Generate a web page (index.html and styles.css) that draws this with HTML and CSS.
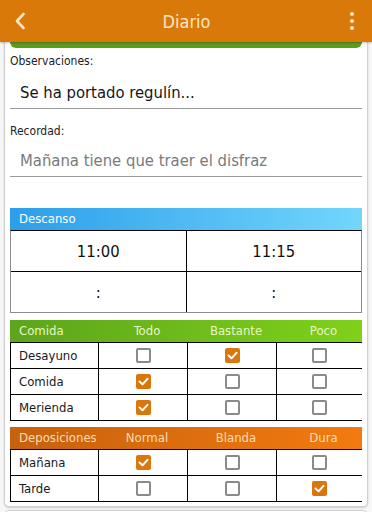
FILE: index.html
```html
<!DOCTYPE html>
<html lang="es">
<head>
<meta charset="utf-8">
<title>Diario</title>
<link rel="stylesheet" href="styles.css">
</head>
<body>
<header class="topbar">
  <svg class="back" width="12" height="18" viewBox="0 0 12 18"><polyline points="9.5,2 3,9 9.5,16" fill="none" stroke="#fbe6c2" stroke-width="2.6" stroke-linecap="round" stroke-linejoin="round"/></svg>
  <div class="title">Diario</div>
  <svg class="more" width="6" height="20" viewBox="0 0 6 20"><circle cx="3" cy="3" r="2" fill="#fbe6c2"/><circle cx="3" cy="10" r="2" fill="#fbe6c2"/><circle cx="3" cy="17" r="2" fill="#fbe6c2"/></svg>
</header>
<main class="page">
  <div class="card">
    <div class="strip"></div>
    <div class="field first">
      <div class="label">Observaciones:</div>
      <div class="input">Se ha portado regulín...</div>
    </div>
    <div class="field second">
      <div class="label">Recordad:</div>
      <div class="input placeholder">Mañana tiene que traer el disfraz</div>
    </div>

    <section class="descanso">
      <div class="bar blue">Descanso</div>
      <div class="times">
        <div class="tcell">11:00</div>
        <div class="tcell">11:15</div>
        <div class="tcell">:</div>
        <div class="tcell">:</div>
      </div>
    </section>

    <section class="tbl comida">
      <div class="bar green cols">
        <span class="hl">Comida</span><span>Todo</span><span>Bastante</span><span>Poco</span>
      </div>
      <div class="grid">
        <div class="rl">Desayuno</div><div class="c"><span class="cb"></span></div><div class="c"><span class="cb on"><svg viewBox="0 0 15 15"><polyline points="3.5,7.5 6.5,10.3 11.5,4.8"/></svg></span></div><div class="c"><span class="cb"></span></div>
        <div class="rl">Comida</div><div class="c"><span class="cb on"><svg viewBox="0 0 15 15"><polyline points="3.5,7.5 6.5,10.3 11.5,4.8"/></svg></span></div><div class="c"><span class="cb"></span></div><div class="c"><span class="cb"></span></div>
        <div class="rl">Merienda</div><div class="c"><span class="cb on"><svg viewBox="0 0 15 15"><polyline points="3.5,7.5 6.5,10.3 11.5,4.8"/></svg></span></div><div class="c"><span class="cb"></span></div><div class="c"><span class="cb"></span></div>
      </div>
    </section>

    <section class="tbl depos">
      <div class="bar orange cols">
        <span class="hl">Deposiciones</span><span>Normal</span><span>Blanda</span><span>Dura</span>
      </div>
      <div class="grid">
        <div class="rl">Mañana</div><div class="c"><span class="cb on"><svg viewBox="0 0 15 15"><polyline points="3.5,7.5 6.5,10.3 11.5,4.8"/></svg></span></div><div class="c"><span class="cb"></span></div><div class="c"><span class="cb"></span></div>
        <div class="rl">Tarde</div><div class="c"><span class="cb"></span></div><div class="c"><span class="cb"></span></div><div class="c"><span class="cb on"><svg viewBox="0 0 15 15"><polyline points="3.5,7.5 6.5,10.3 11.5,4.8"/></svg></span></div>
      </div>
    </section>
  </div>
  <div class="card next">
    <div class="nextgrid"><div></div><div></div></div>
  </div>
</main>
</body>
</html>
```

FILE: styles.css
```css
html, body {
  margin: 0;
  padding: 0;
}
body {
  width: 372px;
  height: 512px;
  overflow: hidden;
  background: #f7f7f7;
  font-family: "DejaVu Sans Condensed", "DejaVu Sans", sans-serif;
  color: #1e1e1e;
}
.topbar {
  height: 42px;
  background: #d9790a;
  display: flex;
  align-items: center;
  padding: 0 17px 0 14px;
  box-sizing: border-box;
  position: relative;
  z-index: 2;
  box-shadow: 0 1px 2px rgba(0,0,0,0.25);
}
.back { display: block; }
.title {
  flex: 1;
  text-align: center;
  color: #fbe6c2;
  font-size: 18px;
  padding-right: 2px;
}
.more { display: block; }

.page {
  padding: 0 4px;
}
.card {
  background: #fff;
  border: 1px solid #d0d0d0;
  border-top: none;
  border-radius: 0 0 5px 5px;
  padding: 0 5px 4px;
  box-shadow: 0 1px 2px rgba(0,0,0,0.18);
}
.strip {
  height: 6px;
  background: #5c9c1b;
  border-radius: 0 0 6px 6px;
}
.field.first { margin-top: 5px; }
.field.second { margin-top: 14px; }
.label {
  font-size: 12px;
  line-height: 16px;
  color: #222;
}
.input {
  font-size: 16.5px;
  line-height: 30px;
  padding: 9px 10px 0;
  border-bottom: 1px solid #9a9a9a;
  color: #161616;
}
.field.second .input { padding-top: 7px; }
.input.placeholder { color: #7a7a7a; }

.descanso { margin-top: 31px; }
.bar {
  height: 22px;
  line-height: 22px;
  font-size: 13px;
  box-sizing: border-box;
}
.bar.blue {
  background: linear-gradient(to right, #2c9eea, #72d6fc);
  color: #fff;
  padding-left: 9px;
}
.times {
  display: grid;
  grid-template-columns: 1fr 1fr;
  gap: 1px;
  background: #000;
  border: 1px solid #8c8c8c;
  border-top-color: #000;
}
.tcell {
  background: #fff;
  height: 40px;
  display: flex;
  align-items: center;
  justify-content: center;
  font-size: 16.5px;
  color: #111;
}

.tbl.comida { margin-top: 7px; }
.tbl.depos { margin-top: 6px; }
.cols {
  display: grid;
  grid-template-columns: 88px 89px 89px 86px;
  text-align: center;
}
.cols span { padding-left: 9px; }
.cols .hl { text-align: left; padding-left: 9px; }
.bar.green {
  background: linear-gradient(to right, #5ca51c, #80d11a);
  color: #e6f6c8;
}
.bar.orange {
  background: linear-gradient(to right, #c7610c, #f37a10);
  color: #fcdcb4;
}
.grid {
  display: grid;
  grid-template-columns: 87px 88px 88px 85px;
  grid-auto-rows: 25px;
  gap: 1px;
  background: #000;
  border: 1px solid #000;
}
.rl {
  background: #fff;
  font-size: 13px;
  padding-left: 8px;
  display: flex;
  align-items: center;
  color: #1a1a1a;
}
.c {
  background: #fff;
  display: flex;
  align-items: center;
  justify-content: center;
}
.cb {
  width: 15px;
  height: 15px;
  box-sizing: border-box;
  border: 2px solid #8a8a8a;
  border-radius: 2px;
  background: #fff;
  display: block;
}
.cb.on {
  background: #d9770c;
  border: none;
}
.cb svg {
  display: block;
  width: 15px;
  height: 15px;
}
.cb polyline {
  fill: none;
  stroke: #fff;
  stroke-width: 2;
  stroke-linecap: round;
  stroke-linejoin: round;
}
.card.next {
  margin-top: 3px;
  border-top: 1px solid #d0d0d0;
  border-radius: 5px 5px 0 0;
  padding: 1px 5px 0;
}
.nextgrid {
  display: grid;
  grid-template-columns: 1fr 1fr;
  gap: 1px;
  background: #000;
  height: 10px;
}
.nextgrid div { background: #fff; }
```
